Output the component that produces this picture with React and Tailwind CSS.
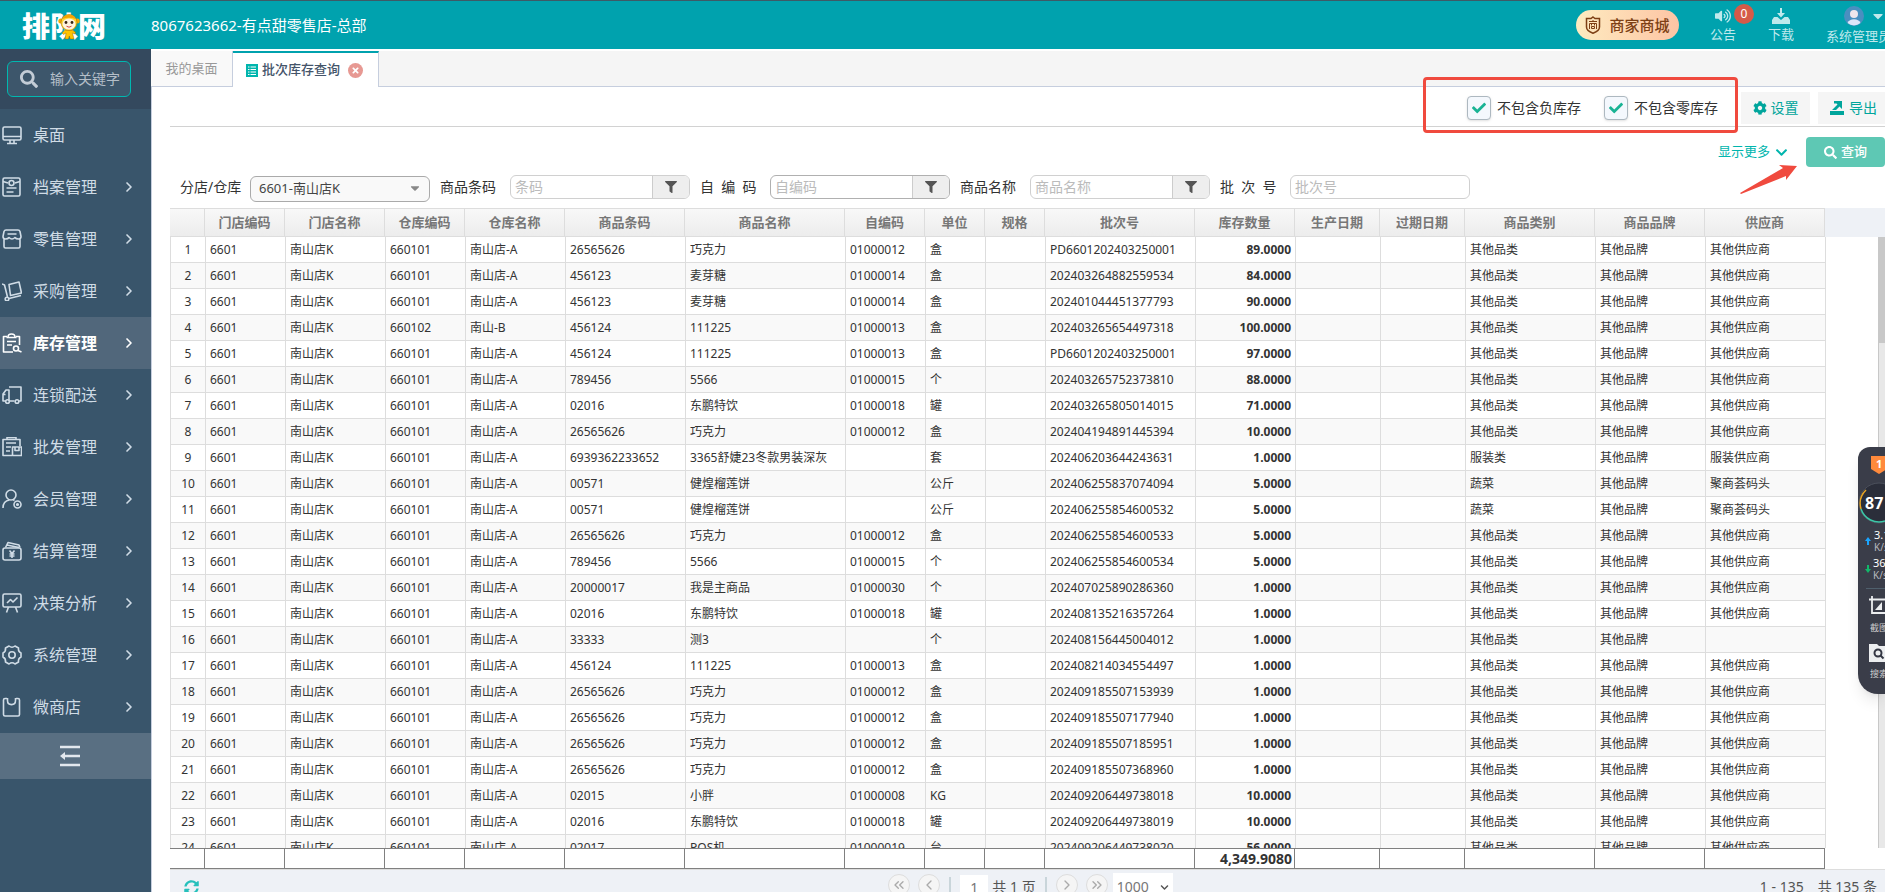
import { useState } from 'react';
import {
  FaSearch, FaFilter, FaCog, FaChevronDown, FaVolumeUp, FaSyncAlt,
  FaTimes, FaCheck, FaCaretDown,
} from 'react-icons/fa';
import { ChevronRight, ChevronLeft, ChevronsLeft, ChevronsRight } from 'lucide-react';

const menu = [
  { name: '桌面', icon: 'desk', leaf: true },
  { name: '档案管理', icon: 'file' },
  { name: '零售管理', icon: 'shop' },
  { name: '采购管理', icon: 'cart' },
  { name: '库存管理', icon: 'stock' },
  { name: '连锁配送', icon: 'truck' },
  { name: '批发管理', icon: 'whole' },
  { name: '会员管理', icon: 'member' },
  { name: '结算管理', icon: 'money' },
  { name: '决策分析', icon: 'chart' },
  { name: '系统管理', icon: 'gear' },
  { name: '微商店', icon: 'bag' },
];

const columns = [
  '门店编码', '门店名称', '仓库编码', '仓库名称', '商品条码', '商品名称', '自编码', '单位', '规格',
  '批次号', '库存数量', '生产日期', '过期日期', '商品类别', '商品品牌', '供应商',
];

const P = '其他品类';
const S = '其他供应商';

// barcode, name, own code, unit, batch, quantity, category, supplier
const stock = [
  ['26565626', '巧克力', '01000012', '盒', 'PD6601202403250001', '89.0000', P, S],
  ['456123', '麦芽糖', '01000014', '盒', '202403264882559534', '84.0000', P, S],
  ['456123', '麦芽糖', '01000014', '盒', '202401044451377793', '90.0000', P, S],
  ['456124', '111225', '01000013', '盒', '202403265654497318', '100.0000', P, S],
  ['456124', '111225', '01000013', '盒', 'PD6601202403250001', '97.0000', P, S],
  ['789456', '5566', '01000015', '个', '202403265752373810', '88.0000', P, S],
  ['02016', '东鹏特饮', '01000018', '罐', '202403265805014015', '71.0000', P, S],
  ['26565626', '巧克力', '01000012', '盒', '202404194891445394', '10.0000', P, S],
  ['6939362233652', '3365舒婕23冬款男装深灰', '', '套', '202406203644243631', '1.0000', '服装类', '服装供应商'],
  ['00571', '健煌榴莲饼', '', '公斤', '202406255837074094', '5.0000', '蔬菜', '聚商荟码头'],
  ['00571', '健煌榴莲饼', '', '公斤', '202406255854600532', '5.0000', '蔬菜', '聚商荟码头'],
  ['26565626', '巧克力', '01000012', '盒', '202406255854600533', '5.0000', P, S],
  ['789456', '5566', '01000015', '个', '202406255854600534', '5.0000', P, S],
  ['20000017', '我是主商品', '01000030', '个', '202407025890286360', '1.0000', P, S],
  ['02016', '东鹏特饮', '01000018', '罐', '202408135216357264', '1.0000', P, S],
  ['33333', '测3', '', '个', '202408156445004012', '1.0000', P, ''],
  ['456124', '111225', '01000013', '盒', '202408214034554497', '1.0000', P, S],
  ['26565626', '巧克力', '01000012', '盒', '202409185507153939', '1.0000', P, S],
  ['26565626', '巧克力', '01000012', '盒', '202409185507177940', '1.0000', P, S],
  ['26565626', '巧克力', '01000012', '盒', '202409185507185951', '1.0000', P, S],
  ['26565626', '巧克力', '01000012', '盒', '202409185507368960', '1.0000', P, S],
  ['02015', '小胖', '01000008', 'KG', '202409206449738018', '10.0000', P, S],
  ['02016', '东鹏特饮', '01000018', '罐', '202409206449738019', '10.0000', P, S],
  ['02017', 'POS机', '01000019', '台', '202409206449738020', '56.0000', P, S],
];

const rows = stock.map(([barcode, name, code, unit, batch, qty, category, supplier], i) => {
  const isB = i === 3;
  return [
    '6601', '南山店K', isB ? '660102' : '660101', isB ? '南山-B' : '南山店-A',
    barcode, name, code, unit, '', batch, qty, '', '', category, '其他品牌', supplier,
  ];
});

const iconShapes = {
  desk: (
    <>
      <rect x="1" y="2" width="18" height="13" rx="1.5" />
      <path d="M1 11.5h18M8 15v3M12 15v3M5 18.5h10" />
    </>
  ),
  file: (
    <>
      <rect x="1" y="1" width="17" height="18" rx="1.5" />
      <path d="M1 4.5l5 1.5M18 4.5L13 6M4.500 11h10M4.500 15h7" />
      <circle cx="9.500" cy="6" r="2.500" />
    </>
  ),
  shop: (
    <path d="M4 1h12q1.500 0 2 1.500L19 7.500q0 2.500-2.500 2.500T13 8.500Q11.500 10 10 10T7 8.500Q6 10 3.500 10T1 7.500L2 2.500Q2.500 1 4 1zM5.500 5h9M2 10v7.500q0 1.500 1.500 1.500h13q1.500 0 1.500-1.500V10" />
  ),
  cart: (
    <>
      <path d="M0 3l2.500 1 3 12M7 3.500L17 1l2.500 11-11 2.500zM7 17.500l12-3" />
      <circle cx="5" cy="18" r="1.800" />
    </>
  ),
  stock: (
    <>
      <path d="M5 3.500H1.500v15.500H11M14 3.500h3.500V12M6 4C6 0 13 0 13 4M4.500 4.500h10M5 8.500h9M5 12h5M16 17.500l3.500 1.500" />
      <circle cx="14" cy="15.500" r="2.500" />
    </>
  ),
  truck: (
    <>
      <path d="M7 2h12v14h-2M12.500 16H8M3.500 16H1V9l3-4h3v11M1 9.500h2.500" />
      <circle cx="5.500" cy="16.500" r="1.800" />
      <circle cx="15" cy="16.500" r="1.800" />
    </>
  ),
  whole: (
    <>
      <path d="M10 18.500H1V2.500h17V9M5 2V.5h9V2M4 6h10M4 10h5M4 14h4" />
      <path d="M10.500 10h9v8.500h-9zM13 10v3.500h4V10" />
    </>
  ),
  member: (
    <>
      <circle cx="9" cy="6" r="5" />
      <path d="M1 19c0-5 3-7.500 6.500-8M11 10.500l1.500 1" />
      <circle cx="15.500" cy="15.500" r="3.500" />
      <circle cx="15.500" cy="15.500" r=".8" />
    </>
  ),
  money: (
    <>
      <rect x="1" y="7" width="18" height="12" rx="2" />
      <path d="M3.500 6.500L6 1.500l11 2.500 1 2.500M5 4l12 2.500M7.500 9.500l2.500 3 2.500-3M10 12.500v4.500M7.500 13h5M7.500 15h5" />
    </>
  ),
  chart: (
    <>
      <rect x="1" y="1" width="18" height="13" rx="1.500" />
      <path d="M5 10l3.500-3.500L11 9l4.500-4.500M6.500 14l-2 5.500M13.500 14l2 5.500" />
    </>
  ),
  gear: (
    <>
      <path d="M7 1Q10 3.500 13 1L16.500 3Q16 6.500 19 8V12Q16 13.500 16.500 17L13 19Q10 16.500 7 19L3.500 17Q4 13.500 1 12V8Q4 6.500 3.500 3z" />
      <circle cx="10" cy="10" r="3.200" />
    </>
  ),
  bag: (
    <path d="M5 1.500H3Q1.500 1.500 1.500 3v14.500Q1.500 19 3 19h13q1.500 0 1.500-1.500V3q0-1.500-1.500-1.500h-2M5.500 1v2.500c0 5.500 8 5.500 8 0V1" />
  ),
};

function MenuIcon({ name }) {
  return (
    <svg viewBox="0 0 20 20" className="h-5 w-5 shrink-0" fill="none" stroke="currentColor" strokeWidth="1.600" strokeLinejoin="round">
      {iconShapes[name]}
    </svg>
  );
}

function Mascot() {
  return (
    <svg viewBox="0 0 22 28" className="absolute top-[2px] left-9 h-7 w-[22px]">
      <path d="M7 17l-3 3 1.500 1.500L8 20l-1 6h3.500l.8-3 .9 3H16l-1.500-6 2.500 1 .5-2-3.500-2z" fill="#ffc400" stroke="#8a5200" strokeWidth=".4" />
      <circle cx="2.800" cy="8" r="2.500" fill="#f5a800" />
      <circle cx="19.200" cy="8" r="2.500" fill="#f5a800" />
      <circle cx="11" cy="9.500" r="8" fill="#ffd633" stroke="#a05a00" strokeWidth=".5" />
      <path d="M4.500 6C6 0 16 0 17.500 6c-4-1.800-9-1.800-13 0z" fill="#f5a300" />
      <ellipse cx="11" cy="11" rx="6.500" ry="5.500" fill="#fff3df" />
      <circle cx="8" cy="9.500" r="1.400" fill="#3a2410" />
      <circle cx="14" cy="9.500" r="1.400" fill="#3a2410" />
      <path d="M8.500 13.200q2.500 2 5 0" stroke="#c33" fill="none" strokeWidth=".9" />
    </svg>
  );
}

function Header() {
  return (
    <header className="flex h-[49px] shrink-0 items-center border-t border-[#3d5a66] bg-[#00a2ae] text-white">
      <div className="relative ml-[22px] w-[129px] font-['Noto_Sans_CJK_SC'] text-[28px] leading-7 font-black">
        排队网
        <Mascot />
      </div>
      <h1 className="text-[15px]">8067623662-有点甜零售店-总部</h1>
      <div className="ml-auto flex shrink-0 items-center">
        <a href="#mall" className="mr-[31px] flex h-[30px] w-[103px] items-center justify-center gap-2 rounded-full bg-linear-to-r from-[#fdebc0] to-[#fdc4a4] text-[15px] font-medium text-[#7d3f14]">
          <svg viewBox="0 0 16 18" className="h-[18px] w-4" fill="none" stroke="currentColor" strokeWidth="1.500">
            <path d="M8 1l2 1.500h4.500V11c0 3-3 5-6.500 6.200C4.500 16 1.500 14 1.500 11V2.500H6z" />
            <path d="M4 5.500h8M8 4v1.500M4.500 13V7.500h7V13M6.500 7.500v2M9.500 7.500v2M6.500 10.500h3v2h-3z" strokeWidth="1" />
          </svg>
          商家商城
        </a>
        <a href="#notice" className="relative mr-8 flex flex-col items-center gap-[2px] text-[13px] leading-4 text-[#bfe9ec]">
          <FaVolumeUp className="h-4 w-4" />
          公告
          <span className="absolute -top-1 left-6 flex h-5 w-5 items-center justify-center rounded-full bg-[#d55a48] text-xs text-white">0</span>
        </a>
        <a href="#download" className="mr-8 flex flex-col items-center gap-[2px] text-[13px] leading-4 text-[#bfe9ec]">
          <svg viewBox="0 0 18 16" className="h-4 w-[18px]" fill="currentColor">
            <path d="M8 0h2v5h3L9 9.500 5 5h3zM2 9h3.500L9 12l3.500-3H16l2 3v4H0v-4z" />
          </svg>
          下载
        </a>
        <button className="-mr-[6px] flex flex-col items-center gap-[2px] text-[13px] leading-4 text-[#bfe9ec]">
          <span className="flex items-center gap-2 pl-3">
            <svg viewBox="0 0 20 20" className="h-5 w-5">
              <circle cx="10" cy="10" r="10" fill="#4a8fc0" />
              <path d="M3.500 17a7 6 0 0113 0 10 10 0 01-13 0z" fill="#dbe6f8" />
              <circle cx="10" cy="8" r="4" fill="#f0e6ec" />
            </svg>
            <FaCaretDown className="h-4 w-3" />
          </span>
          系统管理员
        </button>
      </div>
    </header>
  );
}

function Sidebar() {
  return (
    <aside className="flex w-[151px] shrink-0 flex-col bg-[#39556b] text-[#d0dce6]">
      <div className="h-[60px] shrink-0 bg-[#34495e] px-[7px] pt-3">
        <label className="flex h-9 w-[124px] items-center gap-3 rounded-md border border-[#00b8b0] bg-[#3d566b] pl-3 text-[#c3ccd6]">
          <FaSearch className="h-[18px] w-[18px] shrink-0" />
          <input type="text" aria-label="输入关键字" placeholder="输入关键字" className="w-20 text-sm outline-none placeholder:text-[#b4bec8]" />
        </label>
      </div>
      <nav>
        {menu.map((m) => (
          <a
            key={m.name}
            href="#menu"
            className={
              m.name === '库存管理'
                ? 'flex h-[52px] items-center gap-[11px] bg-[#51677b] pr-[14px] pl-[2px] text-base font-bold text-white'
                : 'flex h-[52px] items-center gap-[11px] pr-[14px] pl-[2px] text-base'
            }
          >
            <MenuIcon name={m.icon} />
            {m.name}
            {!m.leaf && <ChevronRight size={16} strokeWidth={2.5} className="ml-auto" />}
          </a>
        ))}
      </nav>
      <button aria-label="收起菜单" className="flex h-[46px] w-full shrink-0 items-center justify-center bg-[#596f82] pr-3">
        <svg viewBox="0 0 22 22" className="h-[22px] w-[22px]" fill="none" stroke="#e3e8ee" strokeWidth="2.500">
          <path d="M1 2h20M5 11h16M1 20h20" />
          <path d="M1 11l5-4v8z" fill="#e3e8ee" stroke="none" />
        </svg>
      </button>
    </aside>
  );
}

function Tabs() {
  return (
    <div className="flex h-[38px] shrink-0 border-t-2 border-white bg-[#f5f5f5] text-[13px]">
      <button className="w-[82px] border-r border-b border-[#c6cede] bg-[#f9f9f9] text-[#999]">我的桌面</button>
      <div className="flex w-[146px] items-center border-t-2 border-r border-t-[#00a2ae] border-r-[#c6cede] bg-white pl-[13px] text-[#44546a]">
        <svg viewBox="0 0 12 13" className="mr-1 h-[13px] w-3">
          <path d="M0 0h12v13H0z" fill="#00b5ad" />
          <path d="M2 3h1.500M2 5.500h1.500M2 8h1.500M2 10.500h1.500M4.500 3H10M4.500 5.500H10M4.500 8H10M4.500 10.500H10" stroke="#fff" strokeWidth="1.200" />
        </svg>
        <span className="font-medium">批次库存查询</span>
        <button aria-label="关闭" className="ml-2 flex h-[15px] w-[15px] items-center justify-center rounded-full bg-[#e79993] text-white">
          <FaTimes size={9} />
        </button>
      </div>
      <div className="flex-1 border-b border-[#c6cede]" />
    </div>
  );
}

function Check({ label }) {
  const [on, setOn] = useState(true);
  return (
    <label className="flex items-center gap-[6px] text-sm text-[#333]">
      <span className="relative h-6 w-6">
        <input
          type="checkbox"
          checked={on}
          onChange={(e) => setOn(e.target.checked)}
          className="block h-6 w-6 appearance-none rounded-sm border border-[#adb8c0] bg-[#f4f8fd] shadow-sm"
        />
        {on && <FaCheck className="pointer-events-none absolute top-[5px] left-[5px] h-[14px] w-[14px] text-[#1ab394]" />}
      </span>
      {label}
    </label>
  );
}

function Toolbar() {
  return (
    <div className="flex h-10 shrink-0 items-center justify-end border-b border-[#d2d2d2] pt-[2px]">
      <div className="mr-[23px] flex gap-[23px]">
        <Check label="不包含负库存" />
        <Check label="不包含零库存" />
      </div>
      <button className="mr-2 flex h-8 w-[69px] items-center justify-center gap-1 bg-[#f5f5f5] text-sm text-[#00a59c]">
        <FaCog size={14} />
        设置
      </button>
      <button className="flex h-8 w-[67px] items-center justify-center gap-[5px] bg-[#f5f5f5] pl-1 text-sm text-[#00a59c]">
        <svg viewBox="0 0 14 14" className="h-[14px] w-[14px]" fill="currentColor">
          <path d="M0 10h14v4H0zM4 0h8v8l-2.500-2.500L6 9H2l5.500-5.500L6.500 2.500H4z" />
        </svg>
        导出
      </button>
    </div>
  );
}

function FilterInput({ id, label, placeholder, filter, dark }) {
  return (
    <div className="flex shrink-0">
      <label htmlFor={id} className="flex h-6 w-[70px] items-center text-sm whitespace-pre text-[#333]">{label}</label>
      <div className={`flex h-6 w-[180px] overflow-hidden rounded-md border ${dark ? 'border-[#b0b0b0]' : 'border-[#d0d0d0]'}`}>
        <input id={id} type="text" placeholder={placeholder} className="min-w-0 flex-1 px-1 text-sm outline-none placeholder:text-[#bbb]" />
        {filter && (
          <button type="button" aria-label="筛选" className="flex w-[37px] items-center justify-center border-l border-[#ccc] bg-[#eee] text-[#555]">
            <FaFilter size={12} />
          </button>
        )}
      </div>
    </div>
  );
}

function Filters() {
  return (
    <>
      <div className="flex h-12 shrink-0 items-center justify-end pt-[2px]">
        <a href="#more" className="mr-[18px] flex items-center gap-[5px] text-[13px] text-[#00b5ad]">
          显示更多
          <FaChevronDown size={13} />
        </a>
        <button className="flex h-[30px] w-[79px] items-center justify-center gap-1 rounded bg-[#5ec8b4] text-[13px] font-medium text-white">
          <FaSearch size={13} />
          查询
        </button>
      </div>
      <form className="flex h-[33px] shrink-0 gap-[10px] pl-[10px]">
        <div className="flex shrink-0">
          <label htmlFor="branch" className="flex h-6 w-[70px] items-center text-sm text-[#333]">分店/仓库</label>
          <div className="relative">
            <select id="branch" className="h-[26px] w-[180px] appearance-none rounded-md border border-[#aaa] bg-[#f9f9f9] pl-2 text-[13px] text-[#444]">
              <option>6601-南山店K</option>
            </select>
            <FaCaretDown className="pointer-events-none absolute top-[6px] right-2 text-sm text-[#888]" />
          </div>
        </div>
        <FilterInput id="barcode" label="商品条码" placeholder="条码" filter />
        <FilterInput id="code" label={'自  编  码'} placeholder="自编码" filter dark />
        <FilterInput id="name" label="商品名称" placeholder="商品名称" filter />
        <FilterInput id="batch" label={'批  次  号'} placeholder="批次号" />
      </form>
    </>
  );
}

function Cols() {
  return (
    <colgroup>
      <col className="w-[35px]" />
      <col className="w-[80px]" />
      <col className="w-[100px]" />
      <col className="w-[80px]" />
      <col className="w-[100px]" />
      <col className="w-[120px]" />
      <col className="w-[160px]" />
      <col className="w-[80px]" />
      <col className="w-[60px]" />
      <col className="w-[60px]" />
      <col className="w-[150px]" />
      <col className="w-[100px]" />
      <col className="w-[85px]" />
      <col className="w-[85px]" />
      <col className="w-[130px]" />
      <col className="w-[110px]" />
      <col className="w-[120px]" />
    </colgroup>
  );
}

function Grid() {
  return (
    <div className="flex min-h-0 flex-1 flex-col">
      <div className="shrink-0 bg-[#eef1f6]">
        <table className="w-[1655px] table-fixed border-separate border-spacing-0 border-t border-[#ddd] text-[13px] leading-[18px] text-[#777]">
          <Cols />
          <thead>
            <tr className="h-7 bg-linear-to-b from-[#f8f8f8] to-[#ececec]">
              <th aria-label="序号" className="border-r border-b border-[#ddd]" />
              {columns.map((c) => (
                <th key={c} className="border-r border-b border-[#ddd] p-0 pb-[2px] font-bold">{c}</th>
              ))}
            </tr>
          </thead>
        </table>
      </div>
      <div className="flex min-h-0 flex-1 justify-between overflow-hidden">
        <table className="h-max w-[1656px] table-fixed border-separate border-spacing-0 border-l border-[#ddd] text-xs text-[#333]">
          <Cols />
          <tbody>
            {rows.map((row, i) => (
              <tr key={i} className="h-[26px] even:bg-[#f9f9f9]">
                <td className="border-r border-b border-[#ddd] p-0 text-center">{i + 1}</td>
                {row.map((v, j) => (
                  <td
                    key={j}
                    className={
                      j === 10
                        ? 'border-r border-b border-[#ddd] px-1 py-0 text-right font-bold'
                        : 'border-r border-b border-[#ddd] px-1 py-0 whitespace-nowrap'
                    }
                  >
                    {v}
                  </td>
                ))}
              </tr>
            ))}
          </tbody>
        </table>
        <div className="w-[7px] shrink-0 border-l border-[#c8c8c8] bg-[#e8e8e8]">
          <div className="h-[106px] bg-[#c8c8c8]" />
        </div>
      </div>
      <table className="w-[1655px] shrink-0 table-fixed border-separate border-spacing-0 text-sm leading-[18px] text-[#333]">
        <Cols />
        <tbody>
          <tr className="h-[21px]">
            <td className="border-y border-r border-[#808080] p-0" />
            {columns.map((c) => (
              <td key={c} className="border-y border-r border-[#808080] px-[2px] py-0 text-right font-bold">
                {c === '库存数量' ? '4,349.9080' : ''}
              </td>
            ))}
          </tr>
        </tbody>
      </table>
    </div>
  );
}

function PageButton({ label, children }) {
  return (
    <button aria-label={label} className="flex h-[22px] w-[22px] items-center justify-center rounded-full border border-[#ddd] bg-[#f5f5f5] text-[#aaa]">
      {children}
    </button>
  );
}

function Pager() {
  // the bar runs a little past the bottom of the window
  return (
    <footer className="-mb-3 grid h-[35px] shrink-0 grid-cols-[1fr_auto_1fr] items-center border-t border-[#ddd] bg-[#eef1f6] pr-2 pl-[14px] text-sm text-[#555]">
      <button aria-label="刷新" className="justify-self-start text-[#26c0bb]">
        <FaSyncAlt size={15} />
      </button>
      <div className="flex items-center gap-[9px]">
        <div className="flex gap-2 pb-1">
          <PageButton label="首页"><ChevronsLeft size={16} /></PageButton>
          <PageButton label="上一页"><ChevronLeft size={16} /></PageButton>
        </div>
        <span className="h-5 w-[2px] bg-[#c9d5da]" />
        <div className="flex items-center gap-1">
          <input type="text" aria-label="页码" defaultValue="1" className="h-6 w-7 bg-white text-center text-[#777]" />
          <span>共 1 页</span>
        </div>
        <span className="h-5 w-[2px] bg-[#c9d5da]" />
        <div className="flex gap-2 pb-1">
          <PageButton label="下一页"><ChevronRight size={16} /></PageButton>
          <PageButton label="末页"><ChevronsRight size={16} /></PageButton>
        </div>
        <span className="relative -ml-1">
          <select aria-label="每页条数" className="block h-7 w-[60px] appearance-none bg-white pl-1 text-[#777]">
            <option>1000</option>
          </select>
          <FaChevronDown className="pointer-events-none absolute top-[10px] right-1" size={9} />
        </span>
      </div>
      <div className="flex justify-end gap-[14px]">
        <span>1 - 135</span>
        <span>共 135 条</span>
      </div>
    </footer>
  );
}

function Monitor() {
  return (
    <div className="absolute top-[447px] right-0 h-[247px] w-[27px] rounded-l-xl rounded-bl-[20px] bg-[#3a3d49] shadow-lg">
      <div className="flex h-full flex-col overflow-hidden rounded-bl-[20px] text-white">
        <svg viewBox="0 0 27 80" className="h-20 w-[27px] shrink-0">
          <path d="M13 9h16v13l-8 5-8-5z" fill="#ff8a3c" />
          <text x="18" y="21" fill="#fff" fontSize="11" fontWeight="bold">1</text>
          <circle cx="21" cy="56" r="20" fill="#2b2e3a" stroke="#4c505c" strokeWidth="1" />
          <path d="M8 43A19 19 0 0 0 3 62" fill="none" stroke="#e6a323" strokeWidth="1.500" />
          <path d="M3 62a19 19 0 0 0 24 12" fill="none" stroke="#3cc8a8" strokeWidth="1.500" />
          <text x="7" y="62" fill="#fff" fontSize="16" fontWeight="bold">87</text>
        </svg>
        <div className="flex h-7 shrink-0 items-center gap-[3px] pl-[7px] text-[11px] leading-3">
          <svg viewBox="0 0 6 8" className="h-2 w-[6px] shrink-0"><path d="M3 0l3 4H4v4H2V4H0z" fill="#1aa5ff" /></svg>
          <span>3.1<br /><span className="text-[10px] text-[#b6b8be]">K/s</span></span>
        </div>
        <div className="flex h-7 shrink-0 items-center gap-[2px] pl-[7px] text-[11px] leading-3">
          <svg viewBox="0 0 6 8" className="h-2 w-[6px] shrink-0"><path d="M3 8l3-4H4V0H2v4H0z" fill="#12b76a" /></svg>
          <span>36<br /><span className="text-[10px] text-[#b6b8be]">K/s</span></span>
        </div>
        <div className="mt-[5px] ml-2 shrink-0 border-t border-[#4f5f6c] pt-[7px]">
          <svg viewBox="0 0 20 20" className="ml-[3px] h-5 w-5" fill="none" stroke="#eceef0" strokeWidth="1.800">
            <path d="M3 0v17h17M0 3.500h17V20" />
            <path d="M13 6v8H6z" fill="#eceef0" stroke="none" />
          </svg>
          <div className="ml-1 pt-1 text-[9px] leading-4 whitespace-nowrap text-[#ccc]">截图</div>
          <svg viewBox="0 0 20 18" className="mt-2 ml-[3px] h-[18px] w-5">
            <path d="M0 0h8l2 2h10v16H0z" fill="#eceef0" />
            <circle cx="9" cy="9" r="3.500" fill="none" stroke="#333643" strokeWidth="2" />
            <path d="M11.500 11.500l3 3" stroke="#333643" strokeWidth="2" />
          </svg>
          <div className="ml-1 pt-1 text-[9px] leading-4 whitespace-nowrap text-[#ccc]">搜索</div>
        </div>
      </div>
    </div>
  );
}

export default function App() {
  return (
    <div className="relative flex h-screen flex-col overflow-hidden bg-white font-['Noto_Sans','Noto_Sans_CJK_SC',sans-serif]">
      <Header />
      <div className="flex min-h-0 flex-1">
        <Sidebar />
        <main className="flex min-w-0 flex-1 flex-col">
          <Tabs />
          <div className="flex min-h-0 flex-1 flex-col border-l border-[#c6cede] pl-[18px]">
            <Toolbar />
            <Filters />
            <Grid />
            <Pager />
          </div>
        </main>
      </div>
      <div className="pointer-events-none absolute top-[77px] right-[147px] h-14 w-[315px] rounded-sm border-3 border-[#f04a3e]" />
      <svg viewBox="0 0 60 32" className="pointer-events-none absolute top-[163px] right-[86px] h-8 w-[60px]">
        <path d="M1 30L44 5 40 2 58 3 47 17V13L2 31z" fill="#f04a3e" />
      </svg>
      <Monitor />
    </div>
  );
}
